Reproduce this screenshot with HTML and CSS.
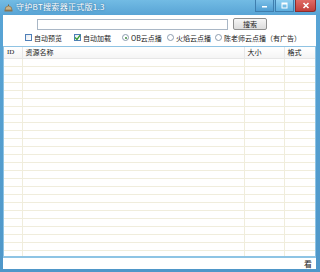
FILE: index.html
```html
<!DOCTYPE html>
<html lang="zh-CN">

<head>
    <meta charset="UTF-8">
    <title>守护BT搜索器正式版1.3</title>
    <link rel="stylesheet" href="styles.css">
</head>

<body>
    <div class="window">
        <div class="title-bar">
            <svg class="app-icon" width="9" height="8" viewBox="0 0 9 8">
                <path d="M1 6 Q1 2 4.5 2 Q8 2 8 6 Z" fill="#c9b48a" stroke="#7a6440" stroke-width="0.6"/>
                <rect x="0.5" y="6" width="8" height="1.5" fill="#8a7450"/>
                <rect x="4" y="0.5" width="1" height="1.5" fill="#7a6440"/>
            </svg>
            <span class="title">守护BT搜索器正式版1.3</span>
            <div class="win-buttons">
                <span class="win-btn">
                    <svg width="7" height="7" viewBox="0 0 7 7"><rect x="1" y="4" width="5" height="1.5" fill="#fff"/></svg>
                </span>
                <span class="win-btn max">
                    <svg width="7" height="7" viewBox="0 0 7 7"><rect x="1" y="1" width="5" height="5" fill="none" stroke="#fff" stroke-width="1"/><rect x="1" y="1" width="5" height="1.5" fill="#fff"/></svg>
                </span>
                <span class="win-btn close">
                    <svg width="8" height="7" viewBox="0 0 8 7"><path d="M1.5 1 L6.5 6 M6.5 1 L1.5 6" stroke="#fff" stroke-width="1.6"/></svg>
                </span>
            </div>
        </div>

        <div class="client">
            <div class="search-row">
                <input type="text" class="search-input">
                <button class="search-button">搜索</button>
            </div>

            <div class="options">
                <label class="opt"><span class="check"></span>自动预览</label>
                <label class="opt"><span class="check checked">
                    <svg width="7" height="7" viewBox="0 0 7 7"><path d="M1 3.5 L3 5.5 L6.2 1.2" fill="none" stroke="#2f9a2f" stroke-width="1.3"/></svg>
                </span>自动加载</label>
                <label class="opt"><span class="radio on"></span>OB云点播</label>
                <label class="opt"><span class="radio"></span>火焰云点播</label>
                <label class="opt"><span class="radio"></span>陈老师云点播（有广告）</label>
            </div>

            <div class="list">
                <table class="results">
                    <thead>
                        <tr>
                            <th class="col-id">ID</th>
                            <th class="col-name">资源名称</th>
                            <th class="col-size">大小</th>
                            <th class="col-fmt">格式</th>
                        </tr>
                    </thead>
                    <tbody id="rows"></tbody>
                </table>
            </div>

            <div class="status-bar">
                <span class="status-text">看</span>
            </div>
        </div>
    </div>

    <script>
        // empty grid lines of the result list
        const rows = document.getElementById('rows');
        for (let i = 0; i < 25; i++) {
            const tr = document.createElement('tr');
            for (let j = 0; j < 4; j++) {
                tr.appendChild(document.createElement('td'));
            }
            rows.appendChild(tr);
        }
    </script>
</body>

</html>
```

FILE: styles.css
```css
* {
    margin: 0;
    padding: 0;
    box-sizing: border-box;
}

body {
    font-family: "Noto Sans CJK SC", "DejaVu Sans", sans-serif;
    background-color: #fff;
    width: 320px;
    height: 272px;
    overflow: hidden;
}

.window {
    width: 320px;
    height: 272px;
    display: flex;
    flex-direction: column;
    background: linear-gradient(#72bbe4, #58a4d5 15px, #4f97c9);
}

.title-bar {
    height: 15px;
    display: flex;
    align-items: flex-start;
    padding-left: 4px;
    color: #fff;
}

.app-icon {
    margin-top: 4px;
    margin-right: 3px;
}

.title {
    font-size: 8px;
    line-height: 14px;
    text-shadow: 0 0 2px rgba(30, 70, 110, 0.7);
    letter-spacing: 0.3px;
}

.win-buttons {
    margin-left: auto;
    margin-right: 4px;
    display: flex;
    gap: 1px;
}

.win-btn {
    width: 19px;
    height: 12px;
    display: flex;
    align-items: center;
    justify-content: center;
    background: linear-gradient(#7cc0e8, #4f9dd1);
    border: 1px solid #3f7eae;
    border-top: none;
}

.win-btn.max {
    background: linear-gradient(#8fd0f2, #5eaedd);
}

.win-btn.close {
    width: 21px;
    background: linear-gradient(#e06b66, #c1403b);
    border-color: #8e2c2a;
    border-radius: 0 0 3px 0;
}

.client {
    flex: 1;
    margin: 0 4px 3px 3px;
    background-color: #fff;
    display: flex;
    flex-direction: column;
}

.search-row {
    display: flex;
    align-items: center;
    height: 15px;
    padding-top: 3px;
    padding-left: 34px;
}

.search-input {
    width: 191px;
    height: 11px;
    border: 1px solid #a9b7c6;
    outline: none;
}

.search-button {
    margin-left: 5px;
    width: 34px;
    height: 12px;
    font-family: inherit;
    font-size: 7px;
    line-height: 10px;
    color: #222;
    background: linear-gradient(#f6f6f6, #dcdcdc);
    border: 1px solid #8e8f8f;
    border-radius: 2px;
}

.options {
    height: 11px;
    display: grid;
    grid-template-columns: 49px 48px 45px 48px auto;
    align-items: center;
    padding-left: 22px;
    margin-top: 2px;
    font-size: 7px;
    color: #222;
}

.opt {
    display: flex;
    align-items: center;
    white-space: nowrap;
}

.check {
    width: 7px;
    height: 7px;
    border: 1px solid #4f7fb8;
    background: linear-gradient(135deg, #e4e9ef, #fff);
    margin-right: 2px;
    display: flex;
    align-items: center;
    justify-content: center;
}

.check svg {
    flex: none;
}

.radio {
    width: 7px;
    height: 7px;
    border: 1px solid #8b9cae;
    border-radius: 50%;
    background: #fff;
    margin-right: 2px;
    position: relative;
}

.radio.on::after {
    content: "";
    position: absolute;
    left: 1.5px;
    top: 1.5px;
    width: 2px;
    height: 2px;
    border-radius: 50%;
    background: #3d8a3d;
}

.list {
    margin-top: 3px;
    height: 212px;
    border: 1px solid #8fc3e3;
    border-bottom: 2px solid #8ec4e4;
    overflow: hidden;
}

.results {
    width: 100%;
    border-collapse: collapse;
    table-layout: fixed;
    font-size: 7px;
    color: #222;
}

.results th {
    height: 11px;
    text-align: left;
    font-weight: normal;
    padding-left: 3px;
    border-right: 1px solid #e7e7e7;
    border-bottom: 1px solid #e6e6e6;
    background: linear-gradient(#fff, #f4f4f4);
    line-height: 9px;
}

.results td {
    height: 8px;
    border-right: 1px solid #f0eddc;
    border-bottom: 1px solid #f0eddc;
}

.col-id {
    width: 18px;
    font-family: "Liberation Serif", serif;
}

.col-name {
    width: 222px;
}

.col-size {
    width: 40px;
}

.results th:last-child,
.results td:last-child {
    border-right: none;
}

.status-bar {
    flex: 1;
    display: flex;
    align-items: center;
    justify-content: flex-end;
    padding-right: 4px;
}

.status-text {
    font-size: 8px;
    color: #222;
}
```
